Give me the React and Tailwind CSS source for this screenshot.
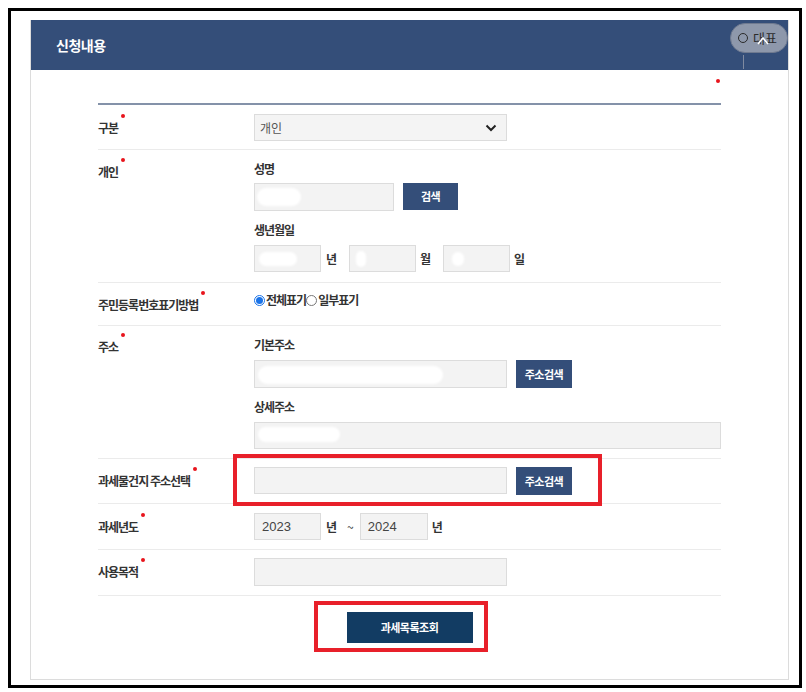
// App.jsx
// 신청내용 form panel with annotation boxes.

const KR = { fontFamily: '"Noto Sans CJK KR", "Noto Sans", sans-serif' };

function Dot() {
  return <span className="absolute -right-[7px] -top-[5px] w-[4px] h-[4px] rounded-full bg-[#e8141c]" />;
}

function LabelCol({ children, className = "" }) {
  return (
    <div className={`w-[156px] shrink-0 text-[12px] leading-[16px] ${className}`}>
      <span className="relative font-bold tracking-[-1px] text-[#333]">
        {children}
        <Dot />
      </span>
    </div>
  );
}

function Field({ className = "", children }) {
  return (
    <div className={`relative border border-[#dcdcdc] bg-[#f3f3f3] ${className}`}>{children}</div>
  );
}

// white smudges where personal data was erased
function Blot({ className }) {
  return <span className={`absolute rounded-full bg-white blur-[1px] ${className}`} />;
}

function SmallButton({ children, className = "" }) {
  return (
    <button className={`bg-[#344e79] text-white text-[11px] font-bold tracking-[-0.5px] ${className}`}>
      {children}
    </button>
  );
}

function Sub({ children, className = "" }) {
  return (
    <div className={`text-[12px] leading-[16px] font-bold tracking-[-1px] text-[#333] ${className}`}>
      {children}
    </div>
  );
}

export default function App() {
  return (
    <div className="p-2 bg-white" style={KR}>
      <div className="w-[794px] h-[680px] border-[3px] border-black pl-[19px] pr-[10px] pt-[9px]">
        <div className="h-[660px] border border-[#dcdcdc] border-t-0">
          {/* header */}
          <div className="relative h-[50px] bg-[#344e79] flex items-center pl-[25px]">
            <h1 className="text-white text-[14px] font-bold tracking-[-0.5px]">신청내용</h1>
            <div className="absolute right-[0px] top-[3px] w-[58px] h-[30px] rounded-full bg-[#8e98ab] border border-[#6f7a90] flex items-center pl-[7px] text-[13px] text-[#2b2b2b]">
              <span className="inline-block w-[10px] h-[10px] rounded-full border-[1.5px] border-[#2b2b2b] mr-[5px]" />
              대표
              <svg className="absolute left-[26px] top-[12px]" width="12" height="9" viewBox="0 0 12 9" fill="none">
                <path d="M1 8 6 2l5 6" stroke="#fff" strokeWidth="1.5" />
              </svg>
            </div>
            <span className="absolute right-[44px] top-[35px] w-px h-[14px] bg-[#7f8aa0]" />
          </div>

          {/* body */}
          <div className="pl-[67px] pr-[67px]">
            <div className="h-[33px] flex justify-end pt-[9px]">
              <span className="w-[4px] h-[4px] rounded-full bg-[#e8141c] mr-[1px]" />
            </div>
            <div className="h-[2px] bg-[#8492a9]" />

            {/* 구분 */}
            <div className="flex items-center pt-[9px] pb-[8px] border-b border-[#ebebeb]">
              <LabelCol>구분</LabelCol>
              <div className="w-[253px] h-[27px] border border-[#dcdcdc] bg-[#f4f4f4] flex items-center justify-between pl-[5px] pr-[9px]">
                <span className="text-[12px] text-[#555]">개인</span>
                <svg width="12" height="8" viewBox="0 0 12 8" fill="none">
                  <path d="M1.5 1.5 6 6l4.5-4.5" stroke="#222" strokeWidth="2" />
                </svg>
              </div>
            </div>

            {/* 개인 */}
            <div className="flex pt-[11px] pb-[10px] border-b border-[#ebebeb]">
              <LabelCol className="pt-[3px]">개인</LabelCol>
              <div>
                <Sub>성명</Sub>
                <div className="flex mt-[6px] gap-[9px]">
                  <Field className="w-[140px] h-[28px]"><Blot className="left-[2px] top-[4px] w-[44px] h-[18px]" /></Field>
                  <SmallButton className="w-[55px] h-[27px]">검색</SmallButton>
                </div>
                <Sub className="mt-[11px]">생년월일</Sub>
                <div className="flex items-center mt-[7px] text-[12px] font-bold text-[#333]">
                  <Field className="w-[67px] h-[27px]"><Blot className="left-[4px] top-[6px] w-[38px] h-[14px]" /></Field>
                  <span className="ml-[5px] w-[23px]">년</span>
                  <Field className="w-[67px] h-[27px]"><Blot className="left-[6px] top-[5px] w-[10px] h-[16px]" /></Field>
                  <span className="ml-[4px] w-[23px]">월</span>
                  <Field className="w-[67px] h-[27px]"><Blot className="left-[8px] top-[6px] w-[12px] h-[14px]" /></Field>
                  <span className="ml-[4px]">일</span>
                </div>
              </div>
            </div>

            {/* 주민등록번호표기방법 */}
            <div className="flex pt-[9px] pb-[12px] border-b border-[#ebebeb]">
              <LabelCol className="pt-[5px]">주민등록번호표기방법</LabelCol>
              <div className="flex items-center h-[16px] text-[12px] font-bold tracking-[-1px] text-[#333]">
                <span className="w-[11px] h-[11px] rounded-full border border-[#1a73e8] flex items-center justify-center">
                  <span className="w-[7px] h-[7px] rounded-full bg-[#1a73e8]" />
                </span>
                <span className="ml-[1px]">전체표기</span>
                <span className="w-[11px] h-[11px] rounded-full border border-[#777] bg-white" />
                <span className="ml-[1px]">일부표기</span>
              </div>
            </div>

            {/* 주소 */}
            <div className="flex pt-[11px] pb-[9px] border-b border-[#ebebeb]">
              <LabelCol className="pt-[2px]">주소</LabelCol>
              <div className="flex-1">
                <Sub>기본주소</Sub>
                <div className="flex mt-[7px] gap-[9px]">
                  <Field className="w-[253px] h-[28px]"><Blot className="left-[3px] top-[5px] w-[185px] h-[18px]" /></Field>
                  <SmallButton className="w-[56px] h-[28px]">주소검색</SmallButton>
                </div>
                <Sub className="mt-[11px]">상세주소</Sub>
                <Field className="mt-[7px] h-[27px]"><Blot className="left-[3px] top-[4px] w-[82px] h-[15px]" /></Field>
              </div>
            </div>

            {/* 과세물건지 주소선택 */}
            <div className="relative flex items-center pt-[8px] pb-[8px] border-b border-[#ebebeb]">
              <LabelCol>과세물건지 주소선택</LabelCol>
              <div className="flex gap-[9px]">
                <Field className="w-[253px] h-[27px]" />
                <SmallButton className="w-[56px] h-[28px]">주소검색</SmallButton>
              </div>
              <div className="absolute left-[135px] top-[-5px] w-[369px] h-[52px] border-[4px] border-[#e8202a]" />
            </div>

            {/* 과세년도 */}
            <div className="flex items-center pt-[9px] pb-[9px] border-b border-[#ebebeb]">
              <LabelCol>과세년도</LabelCol>
              <div className="flex items-center text-[12px] font-bold text-[#333]">
                <Field className="w-[67px] h-[27px] flex items-center pl-[7px]">
                  <span className="text-[13px] font-normal text-[#444]" style={{ fontFamily: '"Liberation Sans", Arial, sans-serif' }}>2023</span>
                </Field>
                <span className="ml-[5px]">년</span>
                <span className="ml-[10px] font-normal">~</span>
                <Field className="ml-[6px] w-[68px] h-[27px] flex items-center pl-[7px]">
                  <span className="text-[13px] font-normal text-[#444]" style={{ fontFamily: '"Liberation Sans", Arial, sans-serif' }}>2024</span>
                </Field>
                <span className="ml-[4px]">년</span>
              </div>
            </div>

            {/* 사용목적 */}
            <div className="flex items-center pt-[8px] pb-[9px] border-b border-[#ebebeb]">
              <LabelCol>사용목적</LabelCol>
              <Field className="w-[253px] h-[28px]" />
            </div>

            {/* submit */}
            <div className="relative flex justify-center pt-[16px]">
              <button className="w-[126px] h-[31px] bg-[#123c63] text-white text-[11px] font-bold tracking-[-0.5px]">
                과세목록조회
              </button>
              <div className="absolute left-[216px] top-[5px] w-[174px] h-[51px] border-[4px] border-[#e8202a]" />
            </div>
          </div>
        </div>
      </div>
    </div>
  );
}
